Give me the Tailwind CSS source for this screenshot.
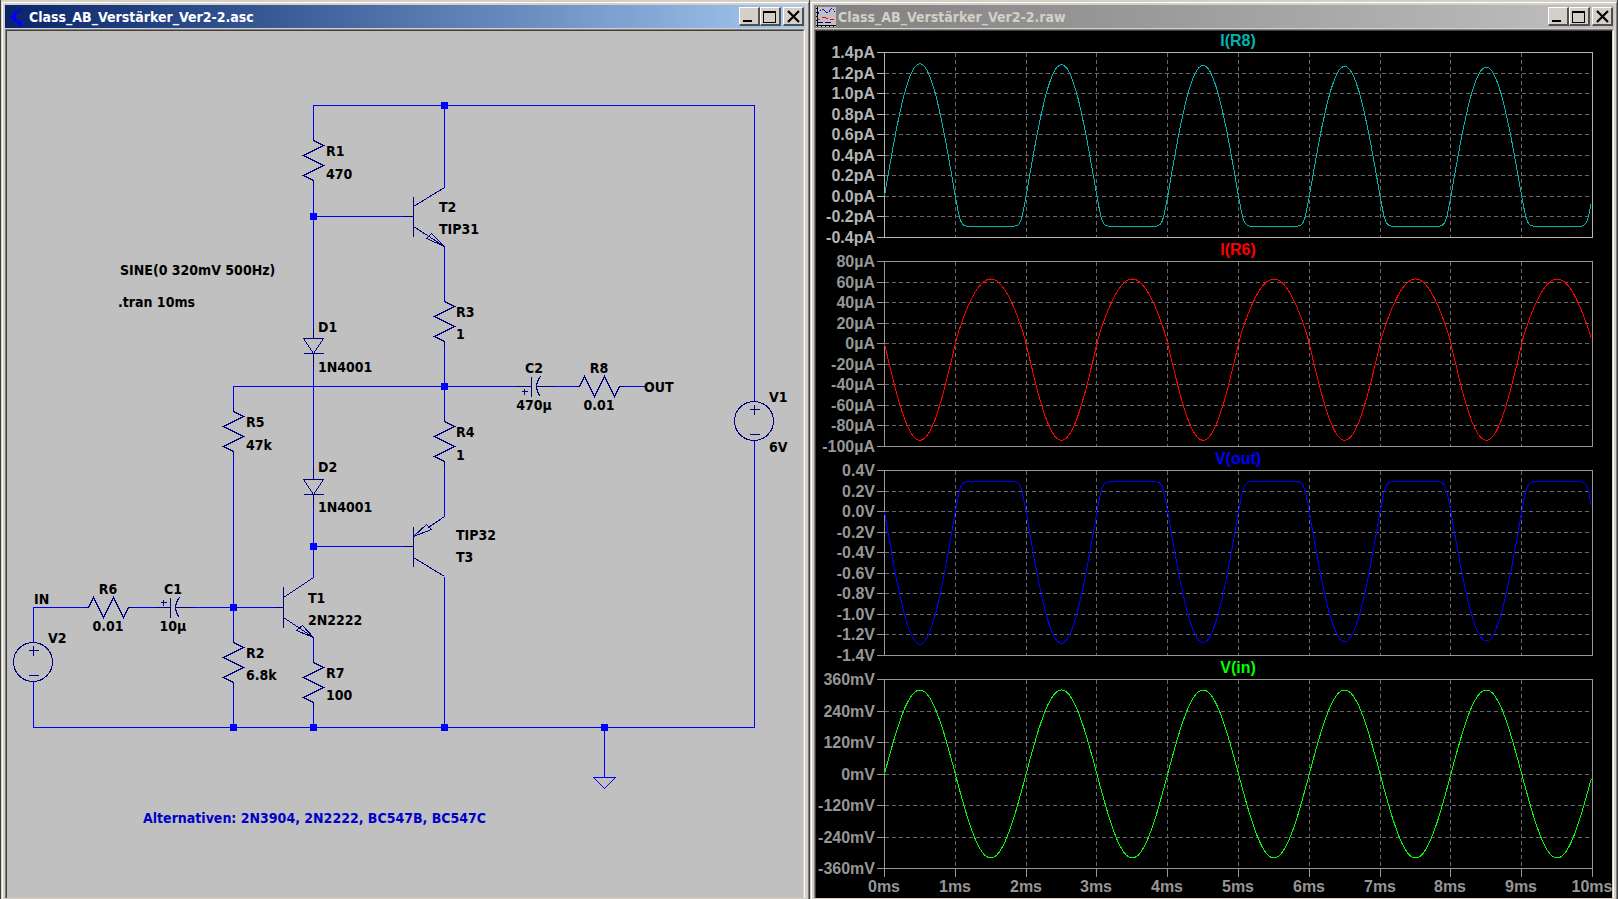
<!DOCTYPE html>
<html lang="de">
<head>
  <meta charset="UTF-8" />
  <meta name="viewport" content="width=device-width, initial-scale=1" />
  <title>Class_AB_Verstärker_Ver2-2</title>
  <script src="https://cdn.jsdelivr.net/npm/@tailwindcss/browser@4"></script>
</head>
<body class="bg-[#d4d0c8] h-screen overflow-hidden grid grid-cols-[810fr_808fr] font-['DejaVu_Sans_Condensed','DejaVu_Sans',sans-serif]">

  <!-- Schematic window -->
  <section class="flex min-w-0 min-h-0 border-x border-[#404040] pt-[2px] pl-px">
    <div class="flex flex-col flex-1 min-w-0 border-t border-l border-r border-t-white border-l-white border-r-[#808080] pt-[2px] pl-[2px] pr-[3px] pb-px">
      <header class="h-[23px] shrink-0 flex items-center pl-1 pr-px bg-linear-to-r from-[#0a246a] to-[#a6caf0]">
        <svg class="w-5 h-5 shrink-0" viewBox="0 0 20 20" shape-rendering="crispEdges" aria-hidden="true">
          <path d="M1 9h4v2h-4zM4 5h3v10h-3z" fill="#00f" />
          <path d="M7 7L12 2M7 13L14 20" stroke="#00f" stroke-width="1.5" stroke-dasharray="4 1" />
          <path d="M8 18v-2l3-2h2v5z" fill="#00f" />
        </svg>
        <h1 class="flex-1 truncate text-sm font-bold text-white">Class_AB_Verstärker_Ver2-2.asc</h1>
        <div class="flex shrink-0">
          <button type="button" aria-label="Minimieren" class="w-[21px] h-[19px] bg-[#d4d0c8] border-t border-l border-b-2 border-r-2 border-t-white border-l-white border-b-[#505050] border-r-[#505050]">
            <svg class="w-[18px] h-4" viewBox="0 0 18 16" aria-hidden="true"><path d="M3 12h9v2h-9z" /></svg>
          </button>
          <button type="button" aria-label="Maximieren" class="w-[21px] h-[19px] bg-[#d4d0c8] border-t border-l border-b-2 border-r-2 border-t-white border-l-white border-b-[#505050] border-r-[#505050]">
            <svg class="w-[18px] h-4" viewBox="0 0 18 16" aria-hidden="true"><path d="M2 3h13v12h-13zM3 5v9h11v-9z" fill-rule="evenodd" /></svg>
          </button>
          <button type="button" aria-label="Schließen" class="ml-[2px] w-[21px] h-[19px] bg-[#d4d0c8] border-t border-l border-b-2 border-r-2 border-t-white border-l-white border-b-[#505050] border-r-[#505050]">
            <svg class="w-[18px] h-4" viewBox="0 0 18 16" aria-hidden="true"><path d="M4 3l11 11M15 3l-11 11" stroke="#000" stroke-width="2.2" /></svg>
          </button>
        </div>
      </header>
      <div class="mt-px flex-1 min-h-0 border-t border-l border-r border-t-[#808080] border-l-[#808080] border-r-white">
        <div class="h-full border-t border-l border-r border-t-[#404040] border-l-[#404040] border-r-[#d4d0c8] bg-[#c0c0c0]">
          <svg class="block w-full h-full" viewBox="7 31 796 867" preserveAspectRatio="xMinYMin meet" role="img" aria-label="Schaltplan Class AB Verstärker">
            <defs>
              <path id="res" d="M0 -4V0L10 5L-10 15L10 25L-10 35L0 40V45" />
              <path id="resH" d="M-4 0H0L5 -10L15 10L25 -10L35 10L40 0H45" />
              <path id="diode" d="M0 -11V0M-10 0H10L0 15L-10 0M-10 15H10M0 15V28" />
              <path id="npn" d="M-10 0H0M0 -20V20M0 -10L31 -29M0 10L31 30L18 17L13 22L31 30" />
              <path id="pnp" d="M-10 0H0M0 -20V20M0 11L31 30M0 -10L13 -22L18 -17L0 -10M15 -19L31 -30" />
              <path id="cap" d="M-16 0H0M0 -10V10M9 -10Q1 0 9 10M5 0H23" />
              <g id="src">
                <circle cx="-0.5" cy="-0.5" r="19.5" />
                <path d="M-5 -12H5M0 -17V-7M-5 13H5" />
              </g>
            </defs>
            <g transform="translate(.5 .5)" fill="none" stroke-width="1" shape-rendering="crispEdges">
              <!-- wires -->
              <g stroke="#0000ff">
                <path d="M313 136V105H754V401M754 440V727H33V681M33 642V607H84" />
                <path d="M313 185V327M313 216H403M444 105V187M444 246V297M444 346V417" />
                <path d="M313 366V468M313 507V577M313 546H403M444 466V516M444 576V727" />
                <path d="M233 407V386H515M554 386H575M624 386H645" />
                <path d="M233 456V638M233 687V727M133 607H154M193 607H273" />
                <path d="M313 637V658M313 707V727M604 727V777M593 777H615L604 788L593 777" />
              </g>
              <!-- components -->
              <g stroke="#000080">
                <use href="#res" x="313" y="140" />
                <use href="#res" x="444" y="301" />
                <use href="#res" x="444" y="421" />
                <use href="#res" x="233" y="411" />
                <use href="#res" x="233" y="642" />
                <use href="#res" x="313" y="662" />
                <use href="#resH" x="88" y="607" />
                <use href="#resH" x="579" y="386" />
                <use href="#diode" x="313" y="338" />
                <use href="#diode" x="313" y="479" />
                <use href="#npn" x="413" y="216" />
                <path d="M273 607H283M283 586V627M283 597L313 577M283 617L313 637L302 625L296 630L313 637" />
                <use href="#pnp" x="413" y="546" />
                <use href="#cap" x="170" y="607" />
                <use href="#cap" x="531" y="386" />
                <path d="M160 602H166M163 599V605M521 391H527M524 388V394" />
                <use href="#src" x="33" y="662" />
                <use href="#src" x="754" y="421" />
              </g>
            </g>
            <!-- junctions -->
            <path fill="#0000ff" shape-rendering="crispEdges" d="M441 102h7v7h-7zM310 213h7v7h-7zM441 383h7v7h-7zM310 543h7v7h-7zM230 604h7v7h-7zM230 724h7v7h-7zM310 724h7v7h-7zM441 724h7v7h-7zM601 724h7v7h-7z" />
            <!-- labels -->
            <g class="text-sm font-bold" fill="#000">
              <text x="326" y="156">R1</text><text x="326" y="179">470</text>
              <text x="439" y="212">T2</text><text x="439" y="234">TIP31</text>
              <text x="120" y="275">SINE(0 320mV 500Hz)</text>
              <text x="118" y="307">.tran 10ms</text>
              <text x="318" y="332">D1</text><text x="318" y="372">1N4001</text>
              <text x="456" y="317">R3</text><text x="456" y="339">1</text>
              <text x="456" y="437">R4</text><text x="456" y="460">1</text>
              <text x="246" y="427">R5</text><text x="246" y="450">47k</text>
              <text x="318" y="472">D2</text><text x="318" y="512">1N4001</text>
              <text x="456" y="540">TIP32</text><text x="456" y="562">T3</text>
              <text x="308" y="603">T1</text><text x="308" y="625">2N2222</text>
              <text x="246" y="658">R2</text><text x="246" y="680">6.8k</text>
              <text x="326" y="678">R7</text><text x="326" y="700">100</text>
              <text x="34" y="604">IN</text><text x="48" y="643">V2</text>
              <text x="644" y="392">OUT</text>
              <text x="769" y="402">V1</text><text x="769" y="452">6V</text>
              <g text-anchor="middle">
                <text x="108" y="594">R6</text><text x="108" y="631">0.01</text>
                <text x="173" y="594">C1</text><text x="173" y="631">10µ</text>
                <text x="534" y="373">C2</text><text x="534" y="410">470µ</text>
                <text x="599" y="373">R8</text><text x="599" y="410">0.01</text>
              </g>
              <text x="143" y="823" fill="#0000c8">Alternativen: 2N3904, 2N2222, BC547B, BC547C</text>
            </g>
          </svg>
        </div>
      </div>
    </div>
  </section>

  <!-- Waveform window -->
  <section class="flex min-w-0 min-h-0 border-r border-[#404040] pt-[2px] pl-px">
    <div class="flex flex-col flex-1 min-w-0 border-t border-l border-r border-t-white border-l-white border-r-[#808080] p-[2px] pb-px">
      <header class="h-[23px] shrink-0 flex items-center pl-[2px] pr-px bg-linear-to-r from-[#808080] to-[#c0c0c0]">
        <svg class="w-5 h-5 mr-[2px] shrink-0" viewBox="0 0 20 20" shape-rendering="crispEdges" aria-hidden="true">
          <path d="M0 0h20v20H0z" fill="#c0c0c0" />
          <path d="M1 0v20M0 18.5h20M0 1.5h2M0 5.5h2M0 9.5h2M0 13.5h2M5.5 18v2M9.5 18v2M13.5 18v2M17.5 18v2" stroke="#000" />
          <path d="M2 7l3-4 2-1 2 2 2 2 2-1 2-3 1-1 3 4" stroke="#0000ff" stroke-dasharray="2 1" fill="none" />
          <path d="M2 12.5h2M6 10.5h4M10 11.5h2M14 12.5h4" stroke="#ff0000" fill="none" />
          <path d="M2 15.5h5M9 15.5h6" stroke="#0000a0" stroke-width="1" />
        </svg>
        <h2 class="flex-1 truncate text-sm font-bold text-[#d4d0c8]">Class_AB_Verstärker_Ver2-2.raw</h2>
        <div class="flex shrink-0">
          <button type="button" aria-label="Minimieren" class="w-[21px] h-[19px] bg-[#d4d0c8] border-t border-l border-b-2 border-r-2 border-t-white border-l-white border-b-[#505050] border-r-[#505050]">
            <svg class="w-[18px] h-4" viewBox="0 0 18 16" aria-hidden="true"><path d="M3 12h9v2h-9z" /></svg>
          </button>
          <button type="button" aria-label="Maximieren" class="w-[21px] h-[19px] bg-[#d4d0c8] border-t border-l border-b-2 border-r-2 border-t-white border-l-white border-b-[#505050] border-r-[#505050]">
            <svg class="w-[18px] h-4" viewBox="0 0 18 16" aria-hidden="true"><path d="M2 3h13v12h-13zM3 5v9h11v-9z" fill-rule="evenodd" /></svg>
          </button>
          <button type="button" aria-label="Schließen" class="ml-[2px] w-[21px] h-[19px] bg-[#d4d0c8] border-t border-l border-b-2 border-r-2 border-t-white border-l-white border-b-[#505050] border-r-[#505050]">
            <svg class="w-[18px] h-4" viewBox="0 0 18 16" aria-hidden="true"><path d="M4 3l11 11M15 3l-11 11" stroke="#000" stroke-width="2.2" /></svg>
          </button>
        </div>
      </header>
      <div class="mt-px flex-1 min-h-0 border-t border-l border-r border-t-[#808080] border-l-[#808080] border-r-white">
        <div class="h-full border-t border-l border-r border-t-[#404040] border-l-[#404040] border-r-[#d4d0c8] bg-black">
          <svg id="plots" class="block w-full h-full font-['Liberation_Sans',Arial,sans-serif] text-base font-bold" viewBox="816 31 796 867" preserveAspectRatio="xMinYMin meet" role="img" aria-label="Signalverläufe"></svg>
        </div>
      </div>
    </div>
  </section>

  <script>
    const svg = document.getElementById('plots');
    const LEFT = 884, WIDTH = 708, MS = 10;

    // half waves flatten out towards the limit
    const clip = (s, limit) => s / Math.pow(1 + Math.pow(s / limit, 4), 0.25);
    const sine = t => Math.sin(Math.PI * t);
    const output = t => {
      const s = sine(t);
      return s > 0 ? (1.292 - 0.004 * t) * s : -clip(-1.15 * s, 0.295);
    };

    const panes = [
      { title: 'I(R8)', color: '#00b4b4', axis: '#b4b4b4', top: 52, height: 185, max: 1.4, min: -0.4,
        labels: ['1.4pA', '1.2pA', '1.0pA', '0.8pA', '0.6pA', '0.4pA', '0.2pA', '0.0pA', '-0.2pA', '-0.4pA'],
        f: output },
      { title: 'I(R6)', color: '#ff0000', axis: '#969696', top: 261, height: 185, max: 80, min: -100,
        labels: ['80µA', '60µA', '40µA', '20µA', '0µA', '-20µA', '-40µA', '-60µA', '-80µA', '-100µA'],
        f: t => { const s = sine(t); return s > 0 ? -94 * s : 63 * Math.pow(-s, 0.88); } },
      { title: 'V(out)', color: '#0000ff', axis: '#969696', top: 470, height: 185, max: 0.4, min: -1.4,
        labels: ['0.4V', '0.2V', '0.0V', '-0.2V', '-0.4V', '-0.6V', '-0.8V', '-1.0V', '-1.2V', '-1.4V'],
        f: t => -output(t) },
      { title: 'V(in)', color: '#00ff00', axis: '#969696', top: 679, height: 189, max: 360, min: -360,
        labels: ['360mV', '240mV', '120mV', '0mV', '-120mV', '-240mV', '-360mV'],
        f: t => 320 * sine(t) },
    ];

    function add(name, attrs, text) {
      const el = document.createElementNS('http://www.w3.org/2000/svg', name);
      for (const key in attrs) el.setAttribute(key, attrs[key]);
      if (text) el.textContent = text;
      svg.appendChild(el);
    }

    function line(d, stroke, dash) {
      add('path', { d, stroke, fill: 'none', 'stroke-dasharray': dash || 'none', transform: 'translate(.5 .5)', 'shape-rendering': 'crispEdges' });
    }

    for (const p of panes) {
      const bottom = p.top + p.height;
      const right = LEFT + WIDTH;
      const steps = p.labels.length - 1;

      add('text', { x: LEFT + WIDTH / 2, y: p.top - 6, fill: p.color, 'text-anchor': 'middle' }, p.title);

      p.labels.forEach((label, i) => {
        const y = Math.round(p.top + p.height * i / steps);
        if (i > 0 && i < steps) line(`M${LEFT} ${y}H${right}`, '#696969', '4 3');
        line(`M${LEFT - 8} ${y}H${LEFT}`, p.axis);
        add('text', { x: LEFT - 9, y: y + 6, fill: p.axis, 'text-anchor': 'end' }, label);
      });

      for (let i = 1; i < MS; i++) {
        const x = Math.round(LEFT + WIDTH * i / MS);
        line(`M${x} ${p.top}V${bottom}`, '#696969', '4 3');
      }
      line(`M${LEFT} ${p.top}H${right}V${bottom}H${LEFT}Z`, p.axis);

      let d = '';
      for (let i = 0; i <= 499; i++) {
        const t = i / 50;
        const x = LEFT + t * WIDTH / MS;
        const y = p.top + (p.max - p.f(t)) / (p.max - p.min) * p.height;
        d += (i ? 'L' : 'M') + x.toFixed(1) + ' ' + y.toFixed(1);
      }
      line(d, p.color);
    }

    // time axis
    for (let i = 0; i <= MS; i++) {
      const x = Math.round(LEFT + WIDTH * i / MS);
      line(`M${x} 868V876`, '#969696');
      add('text', { x, y: 892, fill: '#969696', 'text-anchor': 'middle' }, i + 'ms');
    }
  </script>
</body>
</html>
